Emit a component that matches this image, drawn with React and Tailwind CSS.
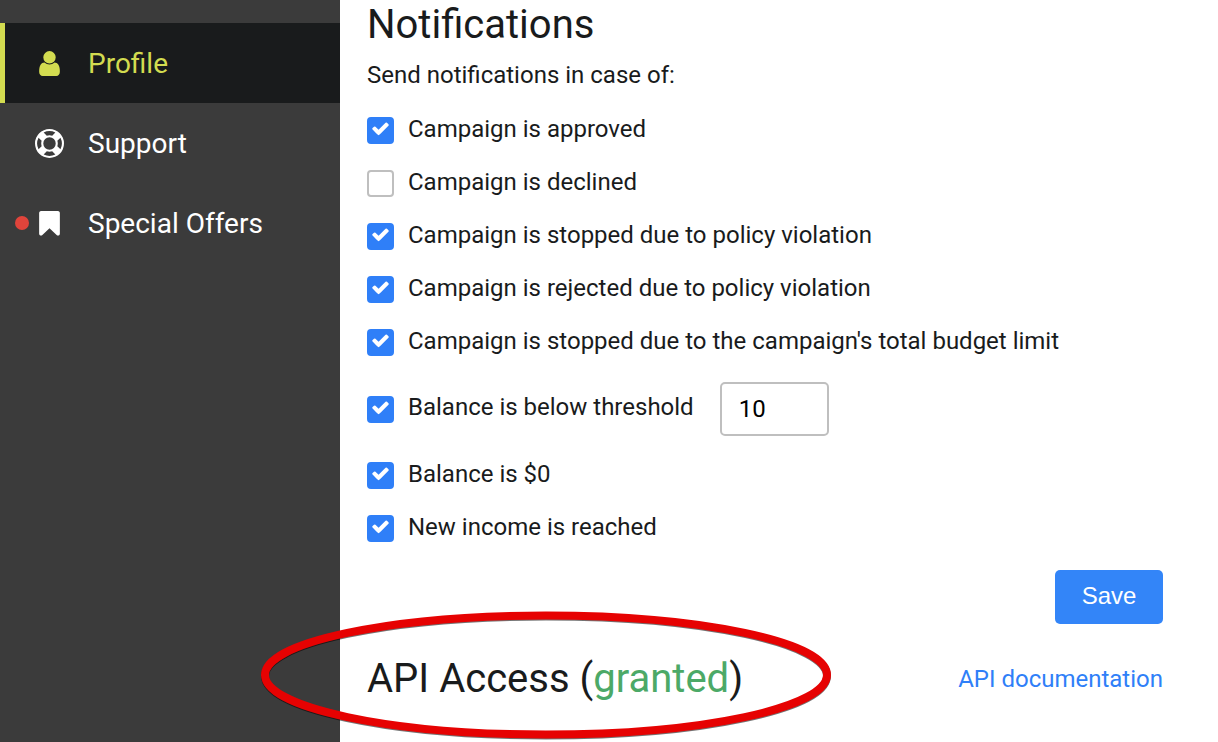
import React, { useState } from 'react'

const navItems = [
  {
    label: 'Profile',
    href: '#profile',
    active: true,
    icon: 'M1536 1399q0 109-62.5 187t-150.5 78h-854q-88 0-150.5-78t-62.5-187q0-85 8.5-160.5t31.5-152 58.5-131 94-89 134.5-34.5q131 128 313 128t313-128q76 0 134.5 34.5t94 89 58.5 131 31.5 152 8.5 160.5zm-256-887q0 159-112.5 271.5t-271.5 112.5-271.5-112.5-112.5-271.5 112.5-271.5 271.5-112.5 271.5 112.5 112.5 271.5z',
  },
  {
    label: 'Support',
    href: '#support',
    icon: 'M896 0q182 0 348 71t286 191 191 286 71 348-71 348-191 286-286 191-348 71-348-71-286-191-191-286-71-348 71-348 191-286 286-191 348-71zm0 128q-190 0-361 90l194 194q82-28 167-28t167 28l194-194q-171-90-361-90zm-678 1129l194-194q-28-82-28-167t28-167l-194-194q-90 171-90 361t90 361zm678 407q190 0 361-90l-194-194q-82 28-167 28t-167-28l-194 194q171 90 361 90zm0-384q159 0 271.5-112.5t112.5-271.5-112.5-271.5-271.5-112.5-271.5 112.5-112.5 271.5 112.5 271.5 271.5 112.5zm484-217l194 194q90-171 90-361t-90-361l-194 194q28 82 28 167t-28 167z',
  },
  {
    label: 'Special Offers',
    href: '#offers',
    badge: true,
    icon: 'M1420 128q23 0 44 9 33 13 52.5 41t19.5 62v1289q0 34-19.5 62t-52.5 41q-19 8-44 8-48 0-83-32l-441-424-441 424q-36 33-83 33-23 0-44-9-33-13-52.5-41t-19.5-62v-1289q0-34 19.5-62t52.5-41q21-9 44-9h1048z',
  },
]

const options = [
  { id: 'approved', label: 'Campaign is approved', checked: true },
  { id: 'declined', label: 'Campaign is declined', checked: false },
  { id: 'stopped', label: 'Campaign is stopped due to policy violation', checked: true },
  { id: 'rejected', label: 'Campaign is rejected due to policy violation', checked: true },
  { id: 'budget', label: "Campaign is stopped due to the campaign's total budget limit", checked: true },
  { id: 'threshold', label: 'Balance is below threshold', checked: true, hasValue: true },
  { id: 'zero', label: 'Balance is $0', checked: true },
  { id: 'income', label: 'New income is reached', checked: true },
]

function NavLink({ item }) {
  return (
    <a
      href={item.href}
      className={
        item.active
          ? 'relative flex h-20 items-center border-l-[5px] border-[#d3dc50] bg-[#191b1c] pl-[30px] text-[#d3dc50]'
          : 'relative flex h-20 items-center border-l-[5px] border-transparent pl-[30px] text-white'
      }
    >
      {item.badge && (
        <span className="absolute left-[10px] size-[14px] rounded-full bg-[#e0443b]" />
      )}
      <svg viewBox="0 0 1792 1792" className="size-[29px] shrink-0 fill-current" aria-hidden="true">
        <path d={item.icon} />
      </svg>
      <span className="ml-6 pt-0.5 text-[28px] leading-8">{item.label}</span>
    </a>
  )
}

function Option({ option, checked, onToggle }) {
  return (
    <div className="flex items-center">
      <span className="grid shrink-0 place-items-center">
        <input
          id={option.id}
          type="checkbox"
          checked={checked}
          onChange={onToggle}
          className="col-start-1 row-start-1 size-[27px] appearance-none rounded-[4px] border-2 border-[#bfbfbf] bg-white checked:border-[#2f7ff8] checked:bg-[#2f7ff8]"
        />
        {checked && (
          <svg
            viewBox="0 0 1792 1792"
            className="pointer-events-none col-start-1 row-start-1 mb-1 size-[19px] fill-white"
            aria-hidden="true"
          >
            <path d="M1671 566q0 40-28 68l-724 724-136 136q-28 28-68 28t-68-28l-136-136-362-362q-28-28-28-68t28-68l136-136q28-28 68-28t68 28l294 295 656-657q28-28 68-28t68 28l136 136q28 28 28 68z" />
          </svg>
        )}
      </span>
      <label htmlFor={option.id} className="-my-1 pb-1 pl-3.5 text-2xl leading-7">
        {option.label}
      </label>
      {option.hasValue && (
        <input
          type="text"
          aria-label="Balance threshold"
          defaultValue="10"
          className="ml-[26px] h-[54px] w-[109px] rounded-[5px] border-2 border-[#bfbfbf] px-[17px] text-2xl text-black"
        />
      )}
    </div>
  )
}

function App() {
  const [checked, setChecked] = useState(() =>
    Object.fromEntries(options.map((o) => [o.id, o.checked]))
  )

  const toggle = (id) => setChecked((prev) => ({ ...prev, [id]: !prev[id] }))

  return (
    <div className="flex min-h-screen bg-white font-[Roboto,sans-serif] text-[#191b1c]">
      <aside className="w-[340px] shrink-0 bg-[#3b3b3b] pt-[23px]">
        <nav>
          {navItems.map((item) => (
            <NavLink key={item.label} item={item} />
          ))}
        </nav>
      </aside>

      <main className="min-w-0 flex-1 pt-px pr-[55px] pl-[27px]">
        <form onSubmit={(e) => e.preventDefault()}>
          <h1 className="text-[40px] leading-12">Notifications</h1>
          <p className="mt-3 text-2xl leading-7">Send notifications in case of:</p>

          <div className="mt-7 flex flex-col gap-[26px]">
            {options.map((option) => (
              <Option
                key={option.id}
                option={option}
                checked={checked[option.id]}
                onToggle={() => toggle(option.id)}
              />
            ))}
          </div>

          <div className="mt-7 flex justify-end">
            <button
              type="submit"
              className="h-[54px] w-[108px] rounded-[5px] bg-[#3385f8] pb-0.5 font-[Liberation_Sans,sans-serif] text-2xl text-white"
            >
              Save
            </button>
          </div>
        </form>

        <section className="mt-[31px] flex items-center justify-between">
          <h2 className="relative text-[40px] leading-12">
            API Access (<span className="text-[#4ca967]">granted</span>)
            {/* highlight ring around the heading */}
            <svg
              viewBox="0 0 572 130"
              className="pointer-events-none absolute -top-11 -left-[107px] h-[130px] w-[572px] max-w-none fill-none"
              aria-hidden="true"
            >
              <ellipse cx="286" cy="65" rx="281" ry="59.5" stroke="#000" strokeOpacity="0.55" strokeWidth="8" />
              <ellipse cx="286" cy="64" rx="281" ry="59.5" stroke="#e60202" strokeWidth="8" />
            </svg>
          </h2>
          <a href="#docs" className="text-2xl leading-7 text-[#2f7ff8]">
            API documentation
          </a>
        </section>
      </main>
    </div>
  )
}

export default App
